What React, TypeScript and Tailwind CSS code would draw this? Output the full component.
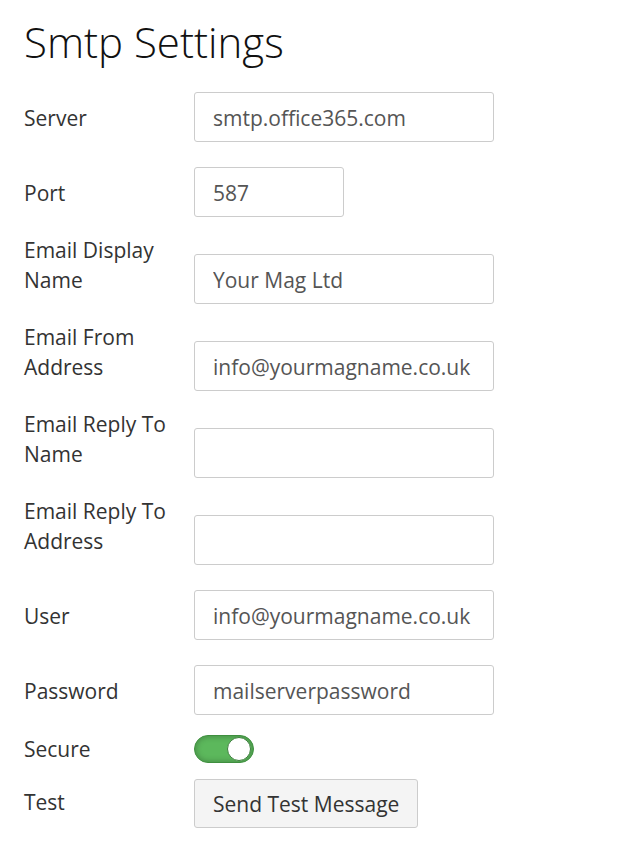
import { useState } from 'react';

type Field = { label: string; value: string; width: string; twoLine?: boolean };

const fields: Field[] = [
  { label: 'Server', value: 'smtp.office365.com', width: 'w-[300px]' },
  { label: 'Port', value: '587', width: 'w-[150px]' },
  { label: 'Email Display Name', value: 'Your Mag Ltd', width: 'w-[300px]', twoLine: true },
  { label: 'Email From Address', value: 'info@yourmagname.co.uk', width: 'w-[300px]', twoLine: true },
  { label: 'Email Reply To Name', value: '', width: 'w-[300px]', twoLine: true },
  { label: 'Email Reply To Address', value: '', width: 'w-[300px]', twoLine: true },
  { label: 'User', value: 'info@yourmagname.co.uk', width: 'w-[300px]' },
  { label: 'Password', value: 'mailserverpassword', width: 'w-[300px]' },
];

export default function App() {
  const [secure, setSecure] = useState(true);

  return (
    <div className="min-h-[844px] bg-white px-6 pt-[14px] text-[21px] text-[#333] [font-family:'Open_Sans',sans-serif]">
      <h1 className="text-[42px] font-light leading-[56px] text-[#111]">Smtp Settings</h1>

      <div className="flex flex-col">
        {fields.map((f, i) => (
          <div
            key={f.label}
            className={`flex items-end ${i === 0 ? 'mt-[22px]' : f.twoLine ? 'mt-[18px]' : 'mt-[25px]'}`}
          >
            <label className="w-[170px] shrink-0 pb-[9px] pr-2 leading-[30px]">{f.label}</label>
            <input
              type="text"
              defaultValue={f.value}
              className={`${f.width} h-[50px] rounded-[3px] border border-[#ccc] px-[18px] pt-[2px] text-[21px] text-[#555] outline-none`}
            />
          </div>
        ))}

        {/* Secure toggle */}
        <div className="mt-[19px] flex items-center">
          <span className="w-[170px] shrink-0 leading-[30px]">Secure</span>
          <button
            type="button"
            onClick={() => setSecure(!secure)}
            className={`flex h-[28px] w-[60px] items-center rounded-full border border-[#3f8f3f] px-[2px] shadow-[inset_0_0_6px_rgba(0,0,0,0.3)] ${
              secure ? 'justify-end bg-[#5cb85c]' : 'justify-start bg-[#ddd]'
            }`}
          >
            <span className="h-[24px] w-[24px] rounded-full border-[1.5px] border-[#3d7f3d] bg-white" />
          </button>
        </div>

        {/* Test */}
        <div className="mt-[15px] flex items-center">
          <span className="w-[170px] shrink-0 pb-[4px] leading-[30px]">Test</span>
          <button
            type="button"
            className="h-[49px] rounded-[3px] border border-[#ccc] bg-[#f4f4f4] px-[18px] pt-[2px] text-[21px] text-[#333]"
          >
            Send Test Message
          </button>
        </div>
      </div>
    </div>
  );
}
